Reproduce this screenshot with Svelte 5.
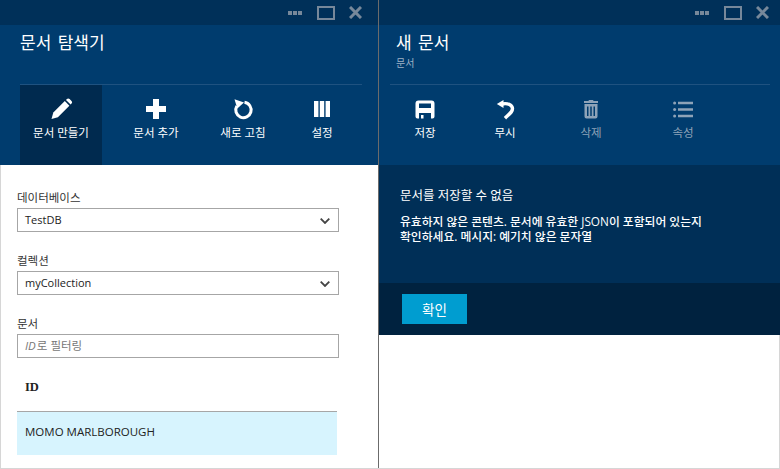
<script>
  const leftTools = [
    { label: '문서 만들기', icon: 'pencil', active: true, width: 82 },
    { label: '문서 추가', icon: 'plus', width: 108 },
    { label: '새로 고침', icon: 'refresh', width: 66 },
    { label: '설정', icon: 'columns', width: 92 }
  ];
  const rightTools = [
    { label: '저장', icon: 'save', width: 76 },
    { label: '무시', icon: 'undo', width: 84 },
    { label: '삭제', icon: 'trash', dim: true, width: 88 },
    { label: '속성', icon: 'list', dim: true, width: 96 }
  ];
</script>

{#snippet icon(name)}
  <svg width="24" height="24" viewBox="0 0 24 24" fill="currentColor">
    {#if name === 'pencil'}
      <path d="M2.500 22l1.800-6.400L15.800 4.100l4.600 4.600L8.900 20.200z" />
      <path d="M17 2.900l.9-.9c.8-.8 1.900-.8 2.700 0l1.900 1.900c.8.8.8 1.900 0 2.700l-.9.9z" />
    {:else if name === 'plus'}
      <path d="M9 2h6v7h7v6h-7v7H9v-7H2V9h7z" />
    {:else if name === 'refresh'}
      <path d="M13.500 5.300A7.700 7.700 0 1 1 5.800 9" fill="none" stroke="currentColor" stroke-width="3" />
      <path d="M3.500 2.300l9.500 3.200-6.700 6z" />
    {:else if name === 'columns'}
      <path d="M4 4h4.400v16H4z M9.800 4h4.400v16H9.800z M15.600 4H20v16h-4.400z" />
    {:else if name === 'save'}
      <path fill-rule="evenodd" d="M5.500 3.500h13a3 3 0 0 1 3 3V19.500a2 2 0 0 1-2 2h-1.500v-5.500H6v5.500H4.500a2 2 0 0 1-2-2V6.500a3 3 0 0 1 3-3zM6 6.500V11h12V6.500zM8 18h2.500v3.500H8z" />
    {:else if name === 'undo'}
      <path d="M3.800 7 10.500 3v8z" />
      <path d="M9 7c6-1.200 10.500 1 10.500 4.800 0 2.800-2.200 4.400-7.500 9.400" fill="none" stroke="currentColor" stroke-width="3.400" />
    {:else if name === 'trash'}
      <path fill-rule="evenodd" d="M10 3h4l.6 1H19v2H5V4h4.400zM5.500 7h13v12.500a2 2 0 0 1-2 2h-9a2 2 0 0 1-2-2zM8 9.500v9.500h1.500V9.500zM11.250 9.500v9.500h1.500V9.500zM14.500 9.500v9.500H16V9.500z" />
    {:else if name === 'list'}
      <circle cx="3.600" cy="6" r="1.500" />
      <circle cx="3.600" cy="12.500" r="1.500" />
      <circle cx="3.600" cy="19" r="1.500" />
      <path d="M7 4.800h15v2.400H7z M7 11.300h15v2.400H7z M7 17.800h15v2.400H7z" />
    {/if}
  </svg>
{/snippet}

{#snippet titlebar()}
  <div class="titlebar">
    <span class="dots"><i></i><i></i><i></i></span>
    <span class="maximize"></span>
    <svg class="close" width="13" height="13" viewBox="0 0 13 13">
      <path d="M1 1l11 11M12 1L1 12" stroke="currentColor" stroke-width="3" />
    </svg>
  </div>
{/snippet}

{#snippet toolbar(tools)}
  <div class="toolbar">
    {#each tools as t}
      <div class="tool" class:active={t.active} class:dim={t.dim} style="width: {t.width}px">
        {@render icon(t.icon)}
        <span>{t.label}</span>
      </div>
    {/each}
  </div>
{/snippet}

{#snippet chevron()}
  <svg width="10" height="6" viewBox="0 0 10 6"><path d="M.7.7L5 5l4.300-4.300" fill="none" stroke="#444" stroke-width="1.800" /></svg>
{/snippet}

<div class="page">
  <section class="blade left">
    <header>
      {@render titlebar()}
      <div class="head">
        <h1>문서 탐색기</h1>
      </div>
      {@render toolbar(leftTools)}
    </header>
    <div class="form">
      <div class="label first">데이터베이스</div>
      <div class="select">TestDB {@render chevron()}</div>
      <div class="label">컬렉션</div>
      <div class="select">myCollection {@render chevron()}</div>
      <div class="label">문서</div>
      <div class="select filter"><em>ID</em>로 필터링</div>
      <div class="col-head">ID</div>
      <div class="row">MOMO MARLBOROUGH</div>
    </div>
  </section>

  <section class="blade right">
    <header>
      {@render titlebar()}
      <div class="head">
        <h1>새 문서</h1>
        <div class="sub">문서</div>
      </div>
      {@render toolbar(rightTools)}
    </header>
    <div class="alert">
      <h2>문서를 저장할 수 없음</h2>
      <p>유효하지 않은 콘텐츠. 문서에 유효한 JSON이 포함되어 있는지<br />확인하세요. 메시지: 예기치 않은 문자열</p>
    </div>
    <div class="alert-foot">
      <button>확인</button>
    </div>
    <div class="rest"></div>
  </section>
</div>

<style>
  :global(body) {
    margin: 0;
  }

  .page {
    width: 780px;
    height: 469px;
    display: flex;
    overflow: hidden;
    box-sizing: border-box;
    background: #fff;
    font-family: "Open Sans", "Noto Sans CJK KR", sans-serif;
    border-bottom: 1px solid #d6d6d6;
  }

  .blade {
    height: 100%;
    display: flex;
    flex-direction: column;
  }

  .left {
    width: 379px;
    box-sizing: border-box;
    border-right: 1px solid #6b6b6b;
    border-left: 1px solid #d6d6d6;
  }

  .right {
    width: 401px;
  }

  header {
    height: 165px;
    flex: none;
    background: #003c6e;
    display: flex;
    flex-direction: column;
    box-sizing: border-box;
  }

  .left header {
    margin-left: -1px;
  }

  .titlebar {
    height: 25px;
    flex: none;
    background: #003059;
    color: #77889a;
    display: flex;
    align-items: center;
    justify-content: flex-end;
    padding-right: 16px;
  }

  .right .titlebar {
    padding-right: 11px;
  }

  .dots {
    display: flex;
    gap: 1px;
    margin-right: 15px;
  }

  .dots i {
    width: 4px;
    height: 4px;
    background: #77889a;
  }

  .maximize {
    width: 14px;
    height: 10px;
    border: 2px solid #77889a;
    margin-right: 14px;
  }

  .head {
    height: 60px;
    flex: none;
    box-sizing: border-box;
    margin: 0 16px 0 20px;
    border-bottom: 1px solid #1f5280;
  }

  .right .head {
    margin: 0 10px 0 11px;
    padding-left: 6px;
  }

  h1 {
    margin: 0;
    padding-top: 6px;
    font-size: 17px;
    font-weight: 400;
    line-height: 24px;
    word-spacing: 2px;
    color: #fff;
  }

  .sub {
    font-size: 10px;
    line-height: 16px;
    color: #9fb2c6;
  }

  .toolbar {
    display: flex;
    height: 80px;
    margin-left: 20px;
  }

  .right .toolbar {
    margin-left: 8px;
  }

  .tool {
    display: flex;
    flex-direction: column;
    align-items: center;
    box-sizing: border-box;
    padding-top: 12px;
    color: #fff;
    font-size: 11.500px;
    line-height: 16px;
    gap: 4px;
  }

  .tool.active {
    background: #002a4f;
  }

  .tool.dim {
    color: #8ea3b8;
  }

  .form {
    flex: 1;
    padding: 0 16px;
    font-size: 11.500px;
    color: #222;
  }

  .label {
    line-height: 16px;
    margin-top: 21px;
    margin-bottom: 2px;
    color: #333;
  }

  .label.first {
    margin-top: 25px;
  }

  .select {
    width: 322px;
    height: 24px;
    box-sizing: border-box;
    border: 1px solid #a6a6a6;
    padding: 0 7px 2px;
    display: flex;
    align-items: center;
    justify-content: space-between;
    font-size: 11px;
    color: #222;
  }

  .select svg {
    margin: 4px 1px 0 0;
  }

  .filter {
    justify-content: flex-start;
    font-size: 11.500px;
    color: #777;
  }

  .filter em {
    margin-right: 1px;
  }

  .col-head {
    font-family: "Liberation Serif", serif;
    font-weight: 700;
    font-size: 12.500px;
    height: 53px;
    box-sizing: border-box;
    padding: 22px 0 0 8px;
    color: #222;
  }

  .row {
    width: 320px;
    height: 44px;
    box-sizing: border-box;
    border-top: 1px solid #a6a6a6;
    background: #d7f4fe;
    padding: 11px 8px 0;
    line-height: 18px;
  }

  .alert {
    height: 118px;
    flex: none;
    box-sizing: border-box;
    background: #002f57;
    padding: 20px 21px 0;
    color: #fff;
  }

  h2 {
    margin: 0;
    font-size: 12.500px;
    font-weight: 400;
    line-height: 22px;
  }

  p {
    margin: 7px 0 0;
    font-size: 11.800px;
    font-weight: 500;
    line-height: 15px;
  }

  .alert-foot {
    height: 52px;
    flex: none;
    box-sizing: border-box;
    background: #00223f;
    padding: 11px 23px;
  }

  .rest {
    flex: 1;
    border-right: 1px solid #d6d6d6;
  }

  button {
    display: block;
    width: 65px;
    height: 30px;
    border: 0;
    padding: 0;
    background: #009dd0;
    color: #fff;
    font-family: inherit;
    font-size: 13.500px;
  }
</style>
